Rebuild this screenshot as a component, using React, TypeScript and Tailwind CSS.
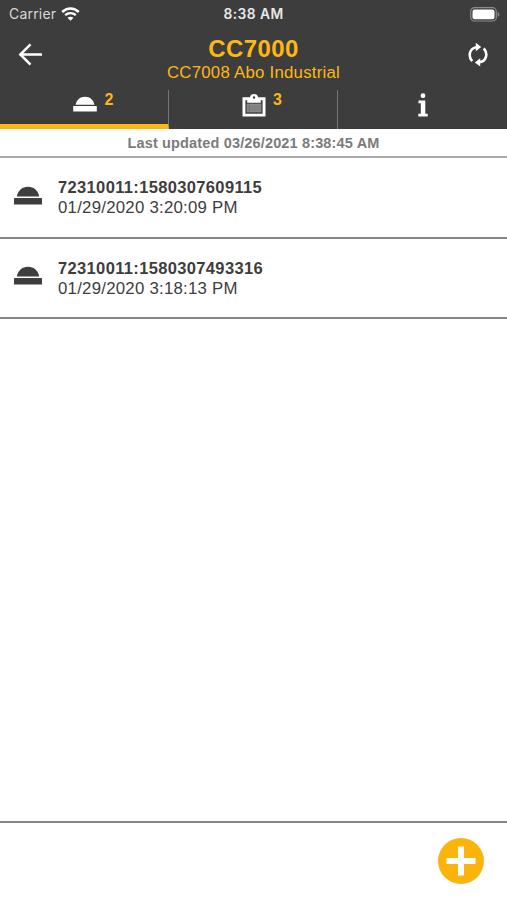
interface Order {
  id: string
  date: string
}

const orders: Order[] = [
  { id: "72310011:1580307609115", date: "01/29/2020 3:20:09 PM" },
  { id: "72310011:1580307493316", date: "01/29/2020 3:18:13 PM" },
]

const BellIcon = ({ className }: { className: string }) => (
  <svg viewBox="0 0 28 19" fill="currentColor" className={className}>
    <path d="M2.8 10.5C3.8 4.800 8 .8 14 .8s10.200 4 11.200 9.700z" />
    <rect x="0" y="12" width="28" height="6.500" rx="0.600" />
  </svg>
)

const WifiIcon = () => (
  <svg viewBox="0 0 19 14" fill="none" stroke="currentColor" className="ml-[5px] h-[14px] w-[19px]">
    <path d="M1.200 5C6 .4 13 .4 17.800 5" strokeWidth="2.500" />
    <path d="M4.200 8.200c3-2.900 7.600-2.900 10.600 0" strokeWidth="2.300" />
    <path d="M9.500 13.700 6.500 10.800c1.700-1.500 4.300-1.500 6 0z" fill="currentColor" stroke="none" />
  </svg>
)

const BatteryIcon = () => (
  <svg viewBox="0 0 30 15" className="h-[15px] w-[30px]">
    <rect x="0.700" y="0.700" width="25.600" height="13.300" rx="3.800" fill="none" stroke="#8c8c8c" strokeWidth="1.200" />
    <rect x="2.500" y="2.400" width="22" height="9.800" rx="2" fill="#fff" />
    <path d="M27.700 5v4.800c2.200-.8 2.200-4 0-4.800z" fill="#8c8c8c" />
  </svg>
)

const BackIcon = () => (
  <svg viewBox="0 0 24 24" fill="none" stroke="currentColor" strokeWidth="2.500" className="h-6 w-6">
    <path d="M24 12.500H2.500M12.500 2.300 2.300 12.500 12.500 22.700" />
  </svg>
)

const SyncIcon = () => (
  <svg viewBox="0 0 20 24" fill="none" stroke="currentColor" strokeWidth="2.600" className="h-6 w-5">
    <path d="M4.200 18.100C-.6 12.300 2 4.600 9 4.200M15.800 5.300c4.800 5.800 2.200 13.500-4.800 13.900" />
    <path d="M7.800-.2v8.400l5.400-4.200zM12.200 23.600v-8.400l-5.400 4.200z" fill="currentColor" stroke="none" />
  </svg>
)

const ClipboardIcon = () => (
  <svg viewBox="0 0 24 24" className="h-6 w-6">
    <path
      d="M.5 4.300h7.400a4.200 4.200 0 0 1 8.200 0h7.400v19.200H.5zM3.400 7.200v13.500h17.200V7.200h-1.800v2.600H5.200V7.200zM12 3.300a1.200 1.200 0 1 0 0 2.400 1.200 1.200 0 0 0 0-2.400z"
      fill="#fff"
      fillRule="evenodd"
    />
    <rect x="4.700" y="10.700" width="14.600" height="8.600" fill="#8b8b8b" />
    <path d="M4.700 13.200h14.600M4.700 15.200h14.600M4.700 17.200h14.600M7.500 10.700v8.600" stroke="#555" strokeWidth="0.300" />
  </svg>
)

const InfoIcon = () => (
  <svg viewBox="0 0 10 24" fill="currentColor" className="h-6 w-[10px]">
    <circle cx="5" cy="2.700" r="2.400" />
    <path d="M.5 7.500h6.800v13.200h2.400v2.800H.3v-2.800h2.500V10.300H.5z" />
  </svg>
)

export default function App() {
  return (
    <div className="flex h-[900px] w-full flex-col overflow-hidden bg-white font-['Liberation_Sans',Arial,sans-serif]">
      <header className="h-[129px] shrink-0 bg-[#3d3d3d] text-white">
        <div className="grid h-7 grid-cols-3 items-center pr-[7px] pl-[9px] font-['Inter',sans-serif] text-[14px] leading-none">
          <div className="flex items-center text-[#d8d8d8]">
            <span className="text-[14px] tracking-[0.200px]">Carrier</span>
            <span className="text-white">
              <WifiIcon />
            </span>
          </div>
          <span className="-ml-[2px] pt-px text-center text-[13.800px] font-semibold tracking-[0.450px] text-[#e8e8e8]">8:38 AM</span>
          <div className="flex justify-end">
            <BatteryIcon />
          </div>
        </div>

        <div className="flex h-[62px] justify-between pr-[19px] pl-[18px]">
          <button className="mt-[14px] h-6 w-6">
            <BackIcon />
          </button>
          <div className="-ml-[3px] text-center text-[#fdb813]">
            <h1 className="mt-[7px] text-[24px] leading-7 font-bold tracking-[0.400px]">CC7000</h1>
            <p className="text-[16.800px] leading-5 tracking-[0.250px]">CC7008 Abo Industrial</p>
          </div>
          <button className="mt-[15px] h-6 w-5">
            <SyncIcon />
          </button>
        </div>

        <nav className="grid h-[39px] grid-cols-3">
          <button className="flex justify-center border-r border-b-[5px] border-r-[#777] border-b-[#fdb813]">
            <BellIcon className="mt-[6px] ml-[18px] h-4 w-6" />
            <span className="ml-2 text-[16px] leading-5 font-bold text-[#fdb813]">2</span>
          </button>
          <button className="flex justify-center border-r border-[#777]">
            <span className="mt-[3px] ml-[18px]">
              <ClipboardIcon />
            </span>
            <span className="ml-[7px] text-[16px] leading-5 font-bold text-[#fdb813]">3</span>
          </button>
          <button className="flex justify-center pt-[3px]">
            <InfoIcon />
          </button>
        </nav>
      </header>

      <div className="h-[29px] shrink-0 border-b-2 border-[#a9a9a9] text-center text-[14.500px] leading-[28px] font-bold tracking-[0.150px] text-[#7b7b7b]">
        Last updated 03/26/2021 8:38:45 AM
      </div>

      <ul className="flex-1">
        {orders.map((order) => (
          <li key={order.id} className="flex h-[80.500px] border-b-2 border-[#858585] pl-[14px] text-[#3d3d3d]">
            <BellIcon className="mt-[27.500px] h-[19px] w-7" />
            <div className="mt-[19px] ml-4">
              <div className="text-[16.500px] leading-5 font-bold tracking-[0.350px]">{order.id}</div>
              <div className="text-[16.800px] leading-[21px] tracking-[0.250px]">{order.date}</div>
            </div>
          </li>
        ))}
      </ul>

      <footer className="flex h-[79px] shrink-0 justify-end border-t-2 border-[#858585] pt-[15px] pr-[23.500px]">
        <button className="h-[46px] w-[46px] rounded-full bg-[#fbb40b]">
          <svg viewBox="0 0 46 46" stroke="#fff" strokeWidth="6" className="h-full w-full">
            <path d="M23 8.500v29M8.500 23h29" />
          </svg>
        </button>
      </footer>
    </div>
  )
}
